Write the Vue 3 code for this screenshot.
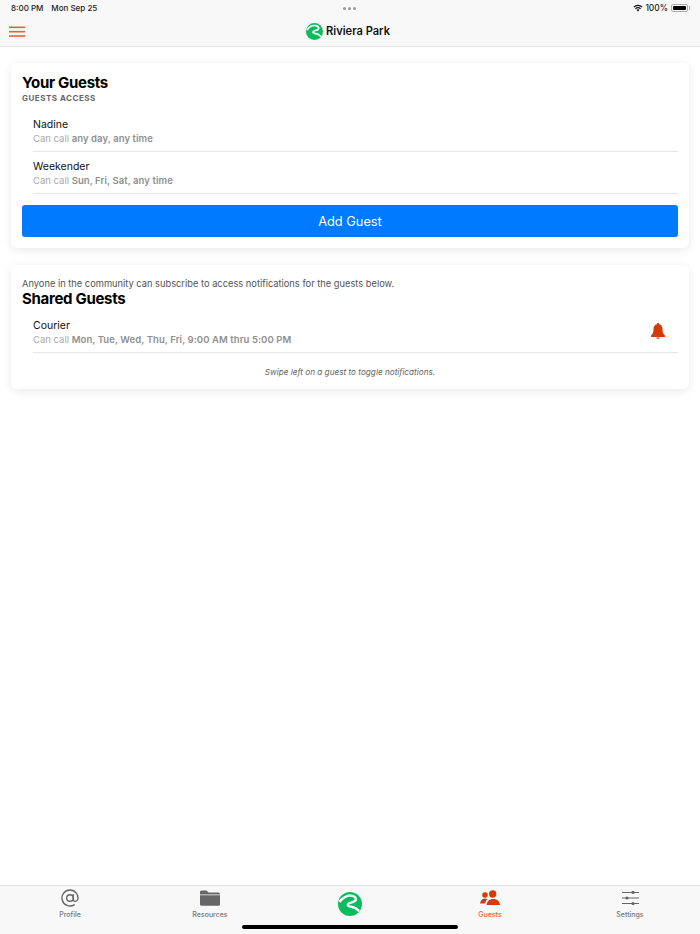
<script setup>
const guests = [
  { name: 'Nadine', when: 'any day, any time' },
  { name: 'Weekender', when: 'Sun, Fri, Sat, any time' },
];
const tabs = [
  { key: 'profile', label: 'Profile' },
  { key: 'resources', label: 'Resources' },
  { key: 'home', label: '' },
  { key: 'guests', label: 'Guests', active: true },
  { key: 'settings', label: 'Settings' },
];
const logoPath = 'M1.500 10C4 6 9 3.300 13 3.600c4 .3 6 3 4.500 5C15.500 11 10 10.300 9.800 12.700 9.700 15 15 14.500 18 16.500l3.200 2.700';
</script>

<template>
  <div class="page">
    <header class="top">
      <div class="status">
        <span class="status-left"><span class="clock">8:00 PM</span>Mon Sep 25</span>
        <span class="dots"><i></i><i></i><i></i></span>
        <span class="status-right">
          <svg width="10" height="8" viewBox="0 0 12 9">
            <path d="M6 8.800 4.200 6.800a2.600 2.600 0 0 1 3.600 0Z" fill="#111" />
            <path d="M2.900 5.400a4.500 4.500 0 0 1 6.200 0" fill="none" stroke="#111" stroke-width="1.400" />
            <path d="M1 3.400a7.200 7.200 0 0 1 10 0" fill="none" stroke="#111" stroke-width="1.400" />
          </svg>
          <span>100%</span>
          <span class="battery"><b></b></span>
        </span>
      </div>
      <div class="nav">
        <svg class="burger" width="16" height="12" viewBox="0 0 16 12" fill="#e2643a">
          <rect x="0" y="0.500" width="16" height="1.600" />
          <rect x="0" y="4.900" width="16" height="1.600" />
          <rect x="0" y="9.200" width="16" height="1.600" />
        </svg>
        <div class="brand">
          <svg width="17" height="17" viewBox="0 0 24 24">
            <circle cx="12" cy="12" r="12" fill="#0dbb5f" />
            <path :d="logoPath" fill="none" stroke="#fff" stroke-width="2.400" />
          </svg>
          <span>Riviera Park</span>
        </div>
      </div>
    </header>

    <main class="content">
      <section class="card first">
        <h2>Your Guests</h2>
        <div class="sub">GUESTS ACCESS</div>
        <ul class="list">
          <li v-for="g in guests" :key="g.name" class="row">
            <div class="name">{{ g.name }}</div>
            <div class="when">Can call <b>{{ g.when }}</b></div>
          </li>
        </ul>
        <button class="add">Add Guest</button>
      </section>

      <section class="card second">
        <p class="intro">Anyone in the community can subscribe to access notifications for the guests below.</p>
        <h2>Shared Guests</h2>
        <ul class="list">
          <li class="row shared">
            <div>
              <div class="name">Courier</div>
              <div class="when">Can call <b>Mon, Tue, Wed, Thu, Fri, 9:00 AM thru 5:00 PM</b></div>
            </div>
            <svg class="bell" width="14" height="16" viewBox="0 0 14 16">
              <path d="M7 0c.7 0 1.100.5 1.100 1.200C10.300 1.700 11.500 3.500 11.500 6c0 3.300.7 5 2.500 6.500V14H0v-1.500C1.800 11 2.500 9.300 2.500 6c0-2.500 1.200-4.300 3.400-4.800C5.900.5 6.300 0 7 0Z" fill="#d13c08" />
              <path d="M5.200 14.600h3.600C8.600 15.500 7.900 16 7 16s-1.600-.5-1.800-1.400Z" fill="#d13c08" />
            </svg>
          </li>
        </ul>
        <p class="hint">Swipe left on a guest to toggle notifications.</p>
      </section>
    </main>

    <nav class="tabs">
      <div v-for="t in tabs" :key="t.key" class="tab" :class="{ active: t.active, home: t.key === 'home' }">
        <div class="tab-icon">
          <svg v-if="t.key === 'profile'" width="18" height="18" viewBox="0 0 18 18" fill="none" stroke="#666" stroke-width="1.400">
            <circle cx="9" cy="9" r="3.300" />
            <path d="M12.300 5.700v5c0 2.300 3.900 2.300 4.600-.5C17.700 5.500 14 1 9 1a8 8 0 1 0 4.200 14.800" stroke-linecap="round" />
          </svg>
          <svg v-else-if="t.key === 'resources'" width="20" height="16" viewBox="0 0 20 16">
            <path d="M0 2a1.500 1.500 0 0 1 1.500-1.500h5L8.500 2.500h10A1.500 1.500 0 0 1 20 4v.5H0Z" fill="#666" />
            <path d="M0 5.300h20v9a1.500 1.500 0 0 1-1.500 1.500h-17A1.500 1.500 0 0 1 0 14.300Z" fill="#666" />
          </svg>
          <svg v-else-if="t.key === 'home'" width="24" height="24" viewBox="0 0 24 24">
            <circle cx="12" cy="12" r="12" fill="#0dbb5f" />
            <path :d="logoPath" fill="none" stroke="#fff" stroke-width="2.400" />
          </svg>
          <svg v-else-if="t.key === 'guests'" width="20" height="15" viewBox="0 0 20 15">
            <circle cx="5" cy="5" r="2.800" fill="#d13c08" />
            <circle cx="12.700" cy="4" r="3.700" fill="#d13c08" />
            <path d="M0 13.500C.5 10 2.500 8.500 5 8.500c1 0 1.800.2 2.500.6C6.200 10.300 5.500 11.800 5.300 13.500Z" fill="#d13c08" />
            <path d="M6.700 15C7 11 9.500 9 13.300 9S19.500 11 20 15Z" fill="#d13c08" />
          </svg>
          <svg v-else width="17" height="14" viewBox="0 0 17 14" fill="#666">
            <rect x="0" y="1" width="17" height="1" />
            <rect x="0" y="6.500" width="17" height="1" />
            <rect x="0" y="12" width="17" height="1" />
            <circle cx="11" cy="1.500" r="1.600" />
            <circle cx="5" cy="7" r="1.600" />
            <circle cx="11" cy="12.500" r="1.600" />
          </svg>
        </div>
        <span v-if="t.label">{{ t.label }}</span>
      </div>
      <div class="home-bar"></div>
    </nav>
  </div>
</template>

<style>
html, body {
  margin: 0;
  background: #fff;
}
</style>

<style scoped>
.page {
  width: 700px;
  height: 934px;
  display: flex;
  flex-direction: column;
  font-family: Inter, "Liberation Sans", sans-serif;
  color: #000;
  overflow: hidden;
}
.top {
  height: 46px;
  background: #f8f8f8;
  border-bottom: 1px solid #e4e4e4;
  flex: none;
}
.status {
  height: 16px;
  padding: 0 12px 0 11px;
  display: grid;
  grid-template-columns: 1fr auto 1fr;
  align-items: center;
  font-size: 8.400px;
  font-weight: 500;
  color: #222;
}
.status-left {
  font-size: 8px;
}
.clock {
  margin-right: 8px;
}
.dots {
  display: flex;
  gap: 2px;
}
.dots i {
  width: 3px;
  height: 3px;
  border-radius: 50%;
  background: #999;
}
.status-right {
  display: flex;
  align-items: center;
  justify-content: flex-end;
  gap: 2px;
}
.battery {
  position: relative;
  width: 17px;
  height: 8px;
  margin-left: 1px;
  border: 1px solid #aaa;
  border-radius: 2px;
  padding: 1px;
  box-sizing: border-box;
  display: flex;
}
.battery b {
  flex: 1;
  background: #000;
  border-radius: 1px;
}
.battery::after {
  content: "";
  position: absolute;
  right: -3px;
  top: 1px;
  width: 1px;
  height: 4px;
  background: #aaa;
}
.nav {
  height: 30px;
  position: relative;
  display: flex;
  align-items: center;
  justify-content: center;
  padding-right: 4px;
}
.burger {
  position: absolute;
  left: 9px;
  top: 10px;
}
.brand {
  display: flex;
  align-items: center;
  gap: 3px;
  font-size: 11.100px;
  font-weight: 600;
  color: #111;
}
.content {
  flex: 1;
  padding: 16px 11px 0;
  display: flex;
  flex-direction: column;
  gap: 17px;
}
.card {
  background: #fff;
  border-radius: 6px;
  box-shadow: 0 2px 10px rgba(0, 0, 0, 0.09);
  padding: 11px;
}
.second {
  padding-top: 12px;
}
h2 {
  margin: 0;
  font-size: 15px;
  line-height: 17px;
  font-weight: 700;
  letter-spacing: -0.3px;
}
.sub {
  margin-top: 1px;
  font-size: 8px;
  line-height: 12px;
  font-weight: 700;
  letter-spacing: 0.5px;
  color: #666;
}
.list {
  list-style: none;
  margin: 6px 0 0;
  padding: 0 0 0 11px;
}
.second .list {
  margin-top: 4px;
}
.row {
  border-bottom: 1px solid #e6e6e6;
  padding: 7px 0 5px;
}
.name {
  font-size: 10.500px;
  line-height: 15px;
  color: #111;
}
.when {
  font-size: 9.500px;
  line-height: 14px;
  color: #aaa;
}
.when b {
  font-weight: 600;
  letter-spacing: 0.08px;
  color: #8f8f8f;
}
.add {
  display: block;
  width: 100%;
  height: 32px;
  margin-top: 11px;
  border: none;
  border-radius: 3px;
  background: #007aff;
  color: #fff;
  font-family: inherit;
  font-size: 12.800px;
}
.intro {
  margin: 0;
  font-size: 9.300px;
  line-height: 13px;
  color: #555;
}
.shared {
  display: flex;
  align-items: center;
  justify-content: space-between;
  padding-right: 13px;
}
.bell {
  margin-bottom: 4px;
}
.hint {
  margin: 14px 0 0;
  text-align: center;
  font-size: 8.200px;
  line-height: 11px;
  font-style: italic;
  color: #666;
}
.tabs {
  height: 49px;
  flex: none;
  position: relative;
  background: #f8f8f8;
  border-top: 1px solid #e2e2e2;
  box-sizing: border-box;
  display: grid;
  grid-template-columns: repeat(5, 1fr);
}
.tab {
  display: flex;
  flex-direction: column;
  align-items: center;
  padding-top: 2px;
  font-size: 7px;
  line-height: 9px;
  font-weight: 500;
  color: #777;
}
.tab-icon {
  height: 19px;
  display: flex;
  align-items: center;
  justify-content: center;
}
.tab span {
  margin-top: 3px;
}
.tab.active {
  color: #e2643a;
}
.tab.home .tab-icon {
  height: 24px;
  margin-top: 4px;
}
.home-bar {
  position: absolute;
  left: 242px;
  bottom: 5px;
  width: 216px;
  height: 4px;
  border-radius: 2px;
  background: #000;
}
</style>
